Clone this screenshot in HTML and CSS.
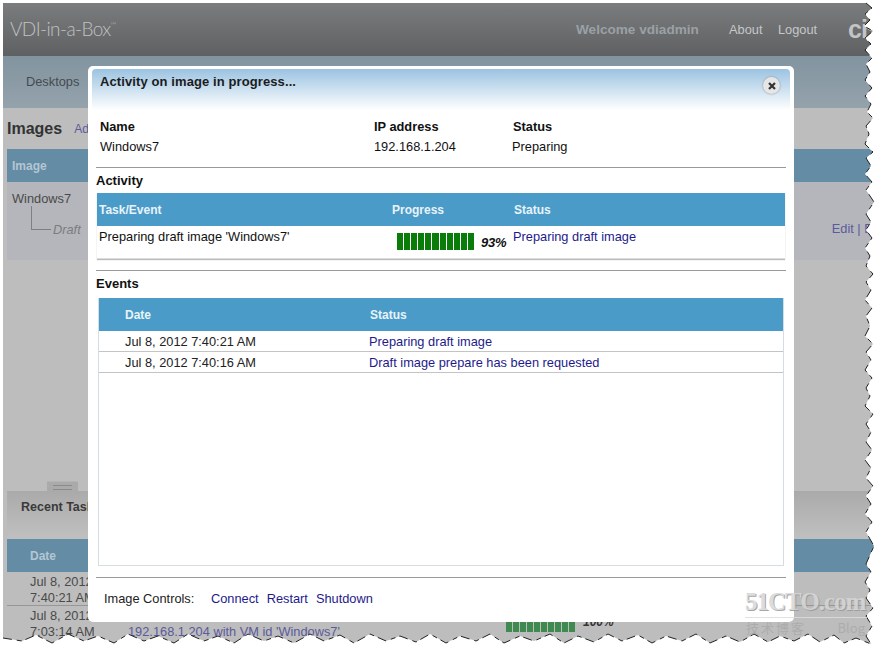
FILE: index.html
```html
<!DOCTYPE html>
<html lang="en">
<head>
<meta charset="utf-8">
<title>VDI-in-a-Box</title>
<link rel="stylesheet" href="styles.css">
</head>
<body>
<div class="app">
  <header class="topbar">
    <div class="brand">VDI-in-a-Box<sup class="tm">™</sup></div>
    <div class="welcome">Welcome vdiadmin</div>
    <a class="toplink about">About</a>
    <a class="toplink logout">Logout</a>
    <div class="logo">ci</div>
  </header>
  <nav class="navbar"><span>Desktops</span></nav>
  <main class="content">
    <div class="title-row"><h1>Images</h1><a class="dim-link">Add</a></div>
    <div class="dim-head"><span>Image</span></div>
    <div class="image-panel">
      <div class="image-name">Windows7</div>
      <div class="draft-row"><i class="tree"></i><em>Draft</em><span class="edit dim-link">Edit | E</span></div>
    </div>
    <div class="splitter-zone"><div class="splitter"></div></div>
    <div class="recent"><span>Recent Tasks</span></div>
    <div class="dim-head date-head"><span>Date</span></div>
    <div class="task-row first">Jul 8, 2012<br>7:40:21 AM</div>
    <div class="task-row second">
      <div class="task-date">Jul 8, 2012<br>7:03:14 AM</div>
      <div class="task-desc dim-link">192.168.1.204 with VM id 'Windows7'</div>
      <div class="task-bar">
        <i></i><i></i><i></i><i></i><i></i><i></i><i></i><i></i><i></i><i></i>
      </div>
      <b class="task-pct">100%</b>
    </div>
  </main>
</div>

<section class="modal">
  <div class="modal-head">
    <h2>Activity on image in progress...</h2>
    <button class="close" aria-label="Close">
      <svg width="8" height="8" viewBox="0 0 8 8"><path d="M1 1 7 7M7 1 1 7" stroke="#333" stroke-width="2.2" fill="none"/></svg>
    </button>
  </div>
  <div class="info">
    <b>Name</b><b>IP address</b><b class="info-status">Status</b>
    <span>Windows7</span><span>192.168.1.204</span><span class="info-status-val">Preparing</span>
  </div>
  <hr class="rule rule-a">
  <h3>Activity</h3>
  <div class="activity">
    <div class="tbl-head act-grid"><span>Task/Event</span><span class="prog-h">Progress</span><span>Status</span></div>
    <div class="act-row act-grid">
      <span>Preparing draft image 'Windows7'</span>
      <div class="progress">
        <div class="bars"><i></i><i></i><i></i><i></i><i></i><i></i><i></i><i></i><i></i><i></i><i></i></div>
        <b>93%</b>
      </div>
      <a class="act-link">Preparing draft image</a>
    </div>
  </div>
  <hr class="rule rule-b">
  <h3>Events</h3>
  <div class="events">
    <div class="tbl-head ev-grid"><span>Date</span><span class="ev-status">Status</span></div>
    <div class="ev-row ev-grid"><span>Jul 8, 2012 7:40:21 AM</span><a>Preparing draft image</a></div>
    <div class="ev-row ev-grid"><span>Jul 8, 2012 7:40:16 AM</span><a>Draft image prepare has been requested</a></div>
  </div>
  <hr class="rule rule-c">
  <div class="controls"><span>Image Controls:</span><a>Connect</a><a>Restart</a><a>Shutdown</a></div>
</section>

<svg class="torn" width="883" height="655" viewBox="0 0 883 655" aria-hidden="true">
  <path class="torn-shadow" d="M868 4 874 10 867 16 872 22 866 28 875 33 867 40 873 46 867 52 874 60 868 66 872 74 867 82 874 90 867 98 873 106 869 114 875 120 868 128 871 136 867 146 875 154 868 160 873 168 867 176 874 184 868 192 876 204 868 216 873 224 868 232 874 240 867 250 872 258 868 268 875 276 868 284 873 292 867 302 874 310 868 318 872 328 867 338 875 346 868 354 873 362 867 372 874 380 868 390 872 398 867 408 875 416 868 426 873 434 868 444 874 452 867 462 873 470 868 480 875 488 868 498 873 506 867 516 874 524 868 534 876 548 868 566 873 574 867 584 872 592 868 600 875 610 868 618 874 628 868 638 873 646 858 640 846 645 836 637 822 644 810 636 796 643 782 638 770 644 756 636 742 644 728 638 712 645 698 636 684 643 668 638 654 645 640 637 624 643 610 636 596 644 580 638 566 645 552 636 536 643 522 638 506 645 492 636 478 643 462 638 448 645 432 636 418 644 402 638 388 643 372 636 356 645 342 637 326 643 312 636 296 645 280 638 266 643 250 636 236 645 220 638 206 643 190 636 176 645 160 638 146 643 130 636 116 645 100 638 86 643 70 636 54 645 38 637 24 643 4 640"/>
  <path class="torn-fill" fill-rule="evenodd" d="M0 0H883V655H0ZM3 3H866L872 8 865 14 870 20 864 26 873 31 865 38 871 44 865 50 872 58 866 64 870 72 865 80 872 88 865 96 871 104 867 112 873 118 866 126 869 134 865 144 873 152 866 158 871 166 865 174 872 182 866 190 874 202 866 214 871 222 866 230 872 238 865 248 870 256 866 266 873 274 866 282 871 290 865 300 872 308 866 316 870 326 865 336 873 344 866 352 871 360 865 370 872 378 866 388 870 396 865 406 873 414 866 424 871 432 866 442 872 450 865 460 871 468 866 478 873 486 866 496 871 504 865 514 872 522 866 532 874 546 866 564 871 572 865 582 870 590 866 598 873 608 866 616 872 626 866 636 871 644 856 638 844 643 834 635 820 642 808 634 794 641 780 636 768 642 754 634 740 642 726 636 710 643 696 634 682 641 666 636 652 643 638 635 622 641 608 634 594 642 578 636 564 643 550 634 534 641 520 636 504 643 490 634 476 641 460 636 446 643 430 634 416 642 400 636 386 641 370 634 354 643 340 635 324 641 310 634 294 643 278 636 264 641 248 634 234 643 218 636 204 641 188 634 174 643 158 636 144 641 128 634 114 643 98 636 84 641 68 634 52 643 36 635 22 641 3 638Z"/>
  <path class="torn-ink" d="M866 3 872 8 865 14 870 20 864 26 873 31 865 38 871 44 865 50 872 58 866 64 870 72 865 80 872 88 865 96 871 104 867 112 873 118 866 126 869 134 865 144 873 152 866 158 871 166 865 174 872 182 866 190 874 202 866 214 871 222 866 230 872 238 865 248 870 256 866 266 873 274 866 282 871 290 865 300 872 308 866 316 870 326 865 336 873 344 866 352 871 360 865 370 872 378 866 388 870 396 865 406 873 414 866 424 871 432 866 442 872 450 865 460 871 468 866 478 873 486 866 496 871 504 865 514 872 522 866 532 874 546 866 564 871 572 865 582 870 590 866 598 873 608 866 616 872 626 866 636 871 644 856 638 844 643 834 635 820 642 808 634 794 641 780 636 768 642 754 634 740 642 726 636 710 643 696 634 682 641 666 636 652 643 638 635 622 641 608 634 594 642 578 636 564 643 550 634 534 641 520 636 504 643 490 634 476 641 460 636 446 643 430 634 416 642 400 636 386 641 370 634 354 643 340 635 324 641 310 634 294 643 278 636 264 641 248 634 234 643 218 636 204 641 188 634 174 643 158 636 144 641 128 634 114 643 98 636 84 641 68 634 52 643 36 635 22 641 3 638"/>
</svg>

<div class="watermark">
  <div class="wm-main">51CTO.com</div>
  <div class="wm-sub"><span lang="zh">技术博客</span><span class="wm-blog">Blog</span></div>
</div>
</body>
</html>
```

FILE: styles.css
```css
* { box-sizing: border-box; }
html, body { margin: 0; padding: 0; }
body {
  width: 883px;
  height: 655px;
  overflow: hidden;
  background: #fff;
  position: relative;
  font: 12.8px/15px "Liberation Sans", Arial, sans-serif;
  color: #111;
}
h1, h2, h3 { margin: 0; }

.app {
  margin: 3px 0 0 3px;
  width: 875px;
  height: 645px;
  overflow: hidden;
  background: #bdbdbd;
  display: flex;
  flex-direction: column;
}

.topbar {
  height: 53px;
  flex: none;
  display: flex;
  align-items: center;
  background: linear-gradient(#7b7c7e, #5f6061);
  padding: 0 0 1px 7px;
}
.topbar > * { flex: none; }
.brand {
  font: 300 19px/24px Lato, "Liberation Sans", sans-serif;
  color: #bfc1c3;
  letter-spacing: -0.6px;
  width: 566px;
}
.tm { font-size: 8px; line-height: 0; vertical-align: 8px; }
.welcome { font-weight: 700; font-size: 13.6px; color: #9aa1a6; width: 153px; white-space: nowrap; }
.toplink { color: #c5c7c9; }
.about { width: 49px; }
.logout { width: 70px; }
.logo { font: 700 25px/25px "Liberation Sans", sans-serif; color: #c2c4c6; letter-spacing: -1px; }

.navbar {
  height: 52px;
  flex: none;
  background: linear-gradient(#8294a0, #94a2ab);
  padding: 18px 0 0 23px;
  color: #444b50;
}

.content { flex: 1; display: flex; flex-direction: column; }
.title-row {
  height: 41px;
  flex: none;
  background: #bdbdbd;
  padding: 11px 0 0 4px;
  display: flex;
  gap: 12px;
}
.title-row h1 { font-size: 16px; line-height: 19px; color: #333; }
.dim-link { color: #5b5a9c; }
.title-row .dim-link { padding-top: 3px; font-size: 12px; }
.dim-head {
  height: 33px;
  flex: none;
  margin-left: 4px;
  background: #648ca5;
  color: #b3c6d2;
  font-weight: 700;
  font-size: 12px;
  padding: 10px 0 0 5px;
}
.image-panel {
  height: 78px;
  flex: none;
  margin-left: 4px;
  background: #b4b6bb;
  padding: 9px 0 0 5px;
  color: #4a4a4a;
}
.draft-row { display: flex; height: 25px; padding-left: 19px; }
.tree {
  width: 20px;
  height: 24px;
  flex: none;
  border-left: 1px solid #7d7f83;
  border-bottom: 1px solid #7d7f83;
}
.draft-row em { color: #7b7c80; margin: 16px 0 0 2px; }
.edit { margin: 15px 0 0 751px; white-space: nowrap; }

.splitter-zone { height: 231px; flex: none; background: #bdbdbd; display: flex; align-items: flex-end; padding-left: 44px; }
.splitter { width: 31px; height: 10px; background: #aaa; border-top: 1px solid #b5b5b5; }
.splitter::after { content: ""; display: block; margin: 3px 6px 0; height: 3px; border-top: 1px solid #8a8a8a; border-bottom: 1px solid #8a8a8a; }

.recent {
  height: 48px;
  flex: none;
  margin-left: 4px;
  background: linear-gradient(#aaaaaa, #c0c0c0);
  padding: 9px 0 0 14px;
  font-weight: 700;
  font-size: 12.5px;
  color: #3a3a3a;
  white-space: nowrap;
}
.date-head { padding-left: 23px; }
.task-row { flex: none; margin-left: 4px; padding-left: 23px; color: #4a4a4a; line-height: 16px; }
.first { height: 34px; padding-top: 2px; border-bottom: 1px solid #979797; }
.second { display: flex; padding-top: 2px; }
.task-date { width: 98px; flex: none; }
.task-desc { padding-top: 16px; white-space: nowrap; width: 378px; flex: none; }
.task-bar { display: flex; gap: 1px; margin-top: 14px; height: 10px; width: 77px; flex: none; }
.task-bar i { width: 6px; height: 10px; background: #3f8a50; }
.task-pct { font-style: italic; color: #333; margin-top: 6px; font-size: 12px; }

.modal {
  position: absolute;
  left: 88px;
  top: 66px;
  width: 706px;
  height: 556px;
  background: #fff;
  border-radius: 5px;
  padding: 3px 4px 0;
}
.modal-head {
  height: 41px;
  background: linear-gradient(#9bc3e1, #fff);
  border-radius: 4px 4px 0 0;
  padding: 5px 8px 0;
  display: flex;
  justify-content: space-between;
}
.modal-head h2 { font-size: 13px; line-height: 16px; color: #1c1c1c; letter-spacing: .1px; }
.close {
  width: 17px;
  height: 17px;
  border: 0;
  padding: 0;
  margin: 3px 2px 0 0;
  border-radius: 50%;
  background: #e6e6e6;
  box-shadow: 0 0 2px #888;
  display: flex;
  align-items: center;
  justify-content: center;
}
.info {
  display: grid;
  grid-template-columns: 274px 139px 1fr;
  grid-auto-rows: 15px;
  align-content: start;
  row-gap: 5px;
  padding: 9px 0 0 8px;
  height: 57px;
}
.info-status-val { margin-left: -1px; }
.rule { border: 0; height: 1px; background: #999; margin: 0 4px; }
.modal h3 { font-size: 13px; line-height: 15px; margin-left: 4px; }
.rule + h3 { margin-top: 5px; }
.activity {
  margin: 5px 5px 0;
  height: 66px;
  box-shadow: 0 1px 1px #bbb;
  border-bottom: 1px solid #ddd;
}
.tbl-head {
  height: 33px;
  background: #4b9bc8;
  color: #e8f3f9;
  font-weight: 700;
  font-size: 12px;
  align-items: center;
  padding-top: 1px;
}
.act-grid { display: grid; grid-template-columns: 293px 122px 1fr; padding-left: 2px; }
.act-row { padding-top: 3px; color: #111; height: 33px; }
.act-link { margin-left: -1px; }
.progress { display: flex; padding: 4px 0 0 5px; }
.progress .bars { display: flex; gap: 1px; height: 17px; width: 78px; flex: none; }
.bars i { width: 6.1px; height: 17px; background: #0a7c0a; flex: none; }
.progress b { font: italic 700 13px/15px "Liberation Sans", sans-serif; margin: 2px 0 0 6px; white-space: nowrap; letter-spacing: -.2px; }
a { color: #1e1a8c; }
.rule-b { margin-top: 11px; }
.events {
  margin: 7px 6px 0;
  height: 268px;
  border: 1px solid #d5dde0;
  border-top: 0;
}
.ev-grid { display: grid; grid-template-columns: 244px 1fr; padding-left: 26px; }
.ev-status { padding-left: 1px; }
.ev-row {
  height: 21px;
  align-items: center;
  border-bottom: 1px solid #c4c4c4;
  color: #222;
  padding-top: 1px;
}
.rule-c { margin-top: 11px; }
.controls { display: flex; padding: 13px 0 0 12px; }
.controls span { width: 107px; color: #222; }
.controls a { margin-right: 8px; }

.torn { position: absolute; left: 0; top: 0; pointer-events: none; }
.torn-fill { fill: #fff; }
.torn-shadow { fill: none; stroke: #b5b5b5; stroke-width: 1; }
.torn-ink { fill: none; stroke: #222; stroke-width: 1; stroke-dasharray: 9 4 5 5; }

.watermark {
  position: absolute;
  left: 745px;
  top: 588px;
  width: 122px;
  color: #d6d6d6;
  pointer-events: none;
  opacity: .85;
}
.wm-main { font: 700 25px/28px "Liberation Serif", serif; letter-spacing: -1px; border-bottom: 1px solid #ddd; white-space: nowrap; height: 30px; text-shadow: 1px 1px 0 #999; }
.wm-sub { display: flex; justify-content: space-between; font: 13px/20px "Noto Sans CJK SC", sans-serif; padding: 0 2px 0 1px; color: #aaa; letter-spacing: 2px; }
.wm-blog { letter-spacing: 0; }
```
